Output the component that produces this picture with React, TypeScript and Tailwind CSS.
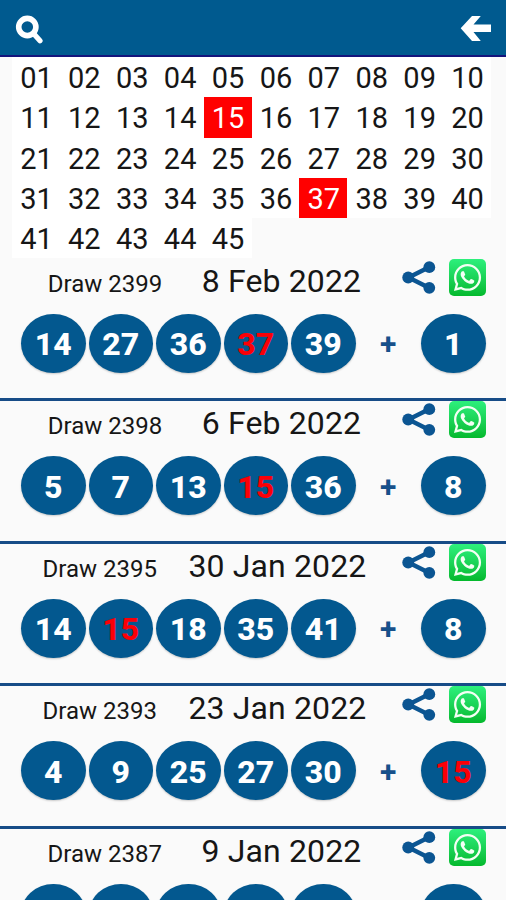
import React from "react";
import { FaWhatsapp } from "react-icons/fa";

type Value = number | null;
type Draw = { id: number; date: string; balls: Value[]; bonus: Value };

const hits = [15, 37];

const draws: Draw[] = [
  { id: 2399, date: "8 Feb 2022", balls: [14, 27, 36, 37, 39], bonus: 1 },
  { id: 2398, date: "6 Feb 2022", balls: [5, 7, 13, 15, 36], bonus: 8 },
  { id: 2395, date: "30 Jan 2022", balls: [14, 15, 18, 35, 41], bonus: 8 },
  { id: 2393, date: "23 Jan 2022", balls: [4, 9, 25, 27, 30], bonus: 15 },
  { id: 2387, date: "9 Jan 2022", balls: [null, null, null, null, null], bonus: null },
];

function SearchIcon() {
  return (
    <svg width="28" height="30" viewBox="0 0 28 30" fill="none" stroke="#fff">
      <circle cx="12.3" cy="12" r="8.6" strokeWidth="5.6" />
      <path d="M18.5 18.5L25 25.8" strokeWidth="5.2" strokeLinecap="round" />
    </svg>
  );
}

function BackIcon() {
  return (
    <svg width="31" height="26" viewBox="0 0 31 26" fill="#fff">
      <path d="M0.7 13.3L12 1H20.8L13.5 9.6H31V17H13.5L20.8 26H12Z" />
    </svg>
  );
}

function ShareIcon() {
  return (
    <svg width="34" height="34" viewBox="0 0 34 34" fill="#0b5592">
      <path d="M27 6.2L6.5 16.5L27 26.8" fill="none" stroke="#0b5592" strokeWidth="4.4" />
      <circle cx="27.3" cy="6.2" r="5.9" />
      <circle cx="6.2" cy="16.5" r="5.9" />
      <circle cx="27.3" cy="26.8" r="5.9" />
    </svg>
  );
}

function Ball({ value }: { value: Value }) {
  return (
    <div
      className={`flex h-[59px] w-[64.5px] shrink-0 items-center justify-center rounded-[50%] bg-[#03588f] pt-[2px] text-[32px] font-extrabold shadow-[0_1px_2px_rgba(0,0,0,0.2)] ${
        value !== null && hits.includes(value) ? "text-[#fb0007]" : "text-white"
      }`}
    >
      {value}
    </div>
  );
}

function DrawRow({ draw }: { draw: Draw }) {
  return (
    <section className="h-[142.5px] shrink-0 border-b-[3.5px] border-[#174c87]">
      <div className="flex h-[55px] items-start">
        <div className="flex w-[402px] items-baseline justify-center gap-[31.5px] whitespace-pre pt-[2px] pl-[7px] leading-10 text-[#161616]">
          <span className="text-[24px]">Draw {draw.id}</span>
          <span className="text-[32px] tracking-[0.14px]">
            {draw.date.length < 11 ? " " : ""}
            {draw.date}
          </span>
        </div>
        <div className="pt-[2px]">
          <ShareIcon />
        </div>
        <div className="ml-[13px] flex h-[37px] w-[37px] items-center justify-center rounded-[5px] bg-linear-to-b from-[#2df07c] to-[#04b92c]">
          <FaWhatsapp size={31} color="#f4fff4" />
        </div>
      </div>
      <div className="flex items-center pl-[21px]">
        <div className="flex gap-[3px]">
          {draw.balls.map((n, i) => (
            <Ball key={i} value={n} />
          ))}
        </div>
        <div className="flex w-[65.5px] justify-center pt-[1px] text-[30px] font-bold text-[#17508a]">
          {draw.bonus !== null ? "+" : ""}
        </div>
        <Ball value={draw.bonus} />
      </div>
    </section>
  );
}

export default function App() {
  const numbers = Array.from({ length: 45 }, (_, i) => i + 1);
  return (
    <main className="flex h-[900px] w-[506px] flex-col overflow-hidden bg-[#fafafa] font-[Roboto,sans-serif]">
      <header className="flex h-[57px] shrink-0 items-start justify-between border-b-2 border-[#14147c] bg-[#005a8f] pt-[15px] pr-[15px] pl-[15px]">
        <SearchIcon />
        <BackIcon />
      </header>
      <div className="mr-[15px] ml-[12px] grid h-[201.5px] w-[479px] shrink-0 grid-cols-10 grid-rows-5 text-[29px] leading-none text-[#161616]">
        {numbers.map((n) => (
          <div
            key={n}
            className={`flex items-center justify-center pt-[3px] pl-[1px] ${
              hits.includes(n) ? "bg-[#ff0000] text-white" : "bg-white"
            }`}
          >
            {String(n).padStart(2, "0")}
          </div>
        ))}
      </div>
      {draws.map((d) => (
        <DrawRow key={d.id} draw={d} />
      ))}
    </main>
  );
}
